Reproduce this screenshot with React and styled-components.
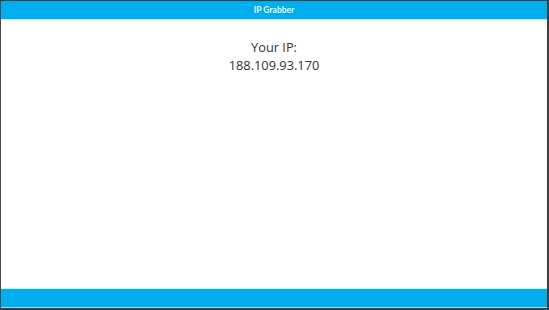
import React from "react";
import styled, { createGlobalStyle } from "styled-components";

const GlobalStyle = createGlobalStyle`
  html, body {
    margin: 0;
    padding: 0;
    background: #3c3c3c;
  }
  #root {
    height: 310px;
  }
`;

export default function App() {
  return (
    <>
      <GlobalStyle />
      <Frame>
        <Header>IP Grabber</Header>
        <Content>
          <Label>Your IP:</Label>
          <Address>188.109.93.170</Address>
        </Content>
        <Footer />
      </Frame>
    </>
  );
}

const Frame = styled.div`
  box-sizing: border-box;
  height: 310px;
  width: 549px;
  display: flex;
  flex-direction: column;
  background: #ffffff;
  border-top: 1px solid #3c3c3c;
  border-left: 1px solid #4a4a4a;
  border-right: 2px solid #3c3c3c;
  border-bottom: 2px solid #3c3c3c;
`;

const Header = styled.div`
  height: 18px;
  background: #00aeef;
  border-bottom: 1px solid #bfe9f9;
  color: #e8f4fa;
  font-family: Lato, "Open Sans", sans-serif;
  font-weight: 700;
  font-size: 8.5px;
  display: flex;
  align-items: center;
  justify-content: center;
`;

const Content = styled.div`
  flex: 1;
  display: flex;
  flex-direction: column;
  align-items: center;
  padding-top: 18px;
  font-family: "Open Sans", sans-serif;
  color: #333333;
  font-size: 12.8px;
  line-height: 18px;
`;

const Label = styled.div``;

const Address = styled.div``;

const Footer = styled.div`
  height: 18px;
  background: #00aeef;
  border-top: 1px solid #d6eef8;
  border-bottom: 1px solid #9fdcf4;
`;
